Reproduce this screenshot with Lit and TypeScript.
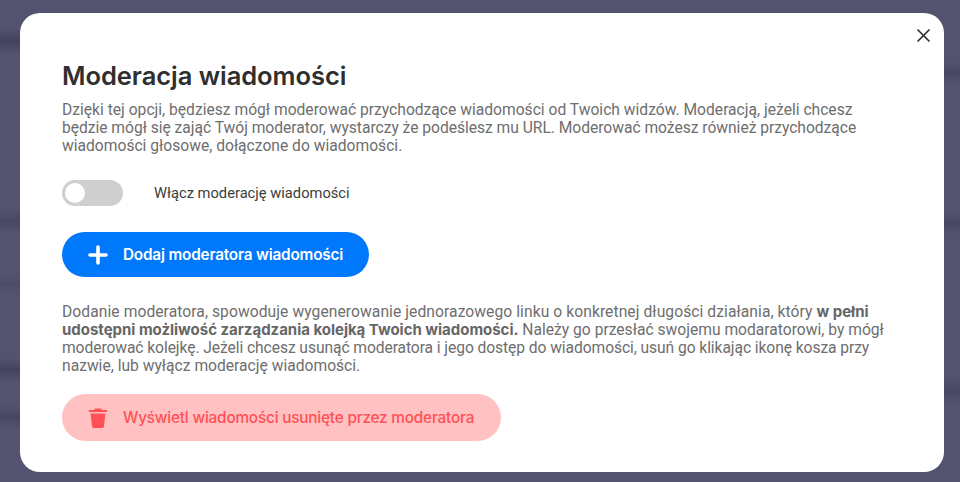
import { LitElement, html, css } from "lit";
import { customElement } from "lit/decorators.js";

@customElement("app-root")
export class AppRoot extends LitElement {
  static styles = css`
    :host {
      display: block;
      width: 960px;
      height: 482px;
      overflow: hidden;
      box-sizing: border-box;
      padding: 13px 16px 10px 20px;
      font-family: "Roboto", "Inter", sans-serif;
      background:
        linear-gradient(180deg, transparent 28px, #43435f 41px, transparent 54px, transparent 208px, #484864 221px, transparent 233px, transparent 275px, #4c4c68 284px, transparent 293px, transparent 358px, #43435f 370px, transparent 382px, transparent 405px, #474763 417px, transparent 429px) left/20px 100% no-repeat,
        linear-gradient(180deg, transparent 62px, #474763 73px, transparent 84px, transparent 212px, #484864 223px, transparent 234px, transparent 378px, #474763 391px, transparent 404px) right/16px 100% no-repeat,
        #53536f;
    }
    .card {
      position: relative;
      box-sizing: border-box;
      height: 459px;
      background: #fff;
      border-radius: 20px;
      padding: 45px 42px 0;
      display: flex;
      flex-direction: column;
      align-items: flex-start;
    }
    .close {
      position: absolute;
      top: 15px;
      right: 13px;
      width: 15px;
      height: 15px;
      display: block;
    }
    h1 {
      margin: 0;
      font-family: "Inter", sans-serif;
      font-size: 25.5px;
      line-height: 36px;
      font-weight: 600;
      color: #2f2f2f;
      letter-spacing: -0.05px;
      white-space: nowrap;
    }
    p {
      margin: 0;
      font-size: 15.63px;
      line-height: 18px;
      font-weight: 400;
      color: #6e6e6e;
      white-space: nowrap;
    }
    p span { display: block; }
    p .tight { letter-spacing: -0.03px; }
    p .wide { letter-spacing: 0.07px; }
    p .narrow { letter-spacing: -0.08px; }
    p b {
      font-family: "Inter", sans-serif;
      font-size: 15px;
      font-weight: 700;
      color: #666;
      letter-spacing: -0.02px;
    }
    .intro { margin-top: 7px; }
    .toggle-row {
      display: flex;
      align-items: center;
      margin-top: 25px;
      height: 26px;
      gap: 31px;
      font-size: 14.7px;
      color: #3c3c3c;
      white-space: nowrap;
    }
    .switch {
      width: 61px;
      height: 26px;
      border-radius: 13px;
      background: #cfcfcf;
      display: flex;
      align-items: center;
      padding-left: 3px;
      box-sizing: border-box;
    }
    .knob { width: 20px; height: 20px; border-radius: 50%; background: #fff; }
    .btn {
      display: flex;
      align-items: center;
      border-radius: 24px;
      padding-left: 26px;
      box-sizing: border-box;
      font-family: "Inter", sans-serif;
      font-size: 15.3px;
      letter-spacing: -0.18px;
      white-space: nowrap;
    }
    .btn svg { display: block; flex: none; }
    .btn span { margin-left: 15px; }
    .add {
      margin-top: 26px;
      width: 307px;
      height: 45px;
      background: #0078fb;
      color: #fff;
      font-weight: 600;
    }
    .outro { margin-top: 26px; }
    .show {
      margin-top: 19px;
      width: 439px;
      height: 47px;
      background: #ffc1c1;
      color: #ff5055;
      font-weight: 500;
    }
  `;

  render() {
    return html`
      <div class="card">
        <svg class="close" viewBox="0 0 15 15" fill="none" stroke="#2b2b2b" stroke-width="1.6">
          <path d="M1.5 1.5 13.5 13.5M13.5 1.5 1.5 13.5"></path>
        </svg>
        <h1>Moderacja wiadomości</h1>
        <p class="intro">
          <span>Dzięki tej opcji, będziesz mógł moderować przychodzące wiadomości od Twoich widzów. Moderacją, jeżeli chcesz</span>
          <span class="tight">będzie mógł się zająć Twój moderator, wystarczy że podeślesz mu URL. Moderować możesz również przychodzące</span>
          <span>wiadomości głosowe, dołączone do wiadomości.</span>
        </p>
        <div class="toggle-row">
          <div class="switch"><div class="knob"></div></div>
          <span>Włącz moderację wiadomości</span>
        </div>
        <div class="btn add">
          <svg width="20" height="20" viewBox="0 0 20 20" fill="none" stroke="#fff" stroke-width="3.6" stroke-linecap="round">
            <path d="M10 2V18M2 10H18"></path>
          </svg>
          <span>Dodaj moderatora wiadomości</span>
        </div>
        <p class="outro">
          <span class="wide">Dodanie moderatora, spowoduje wygenerowanie jednorazowego linku o konkretnej długości działania, który <b>w pełni</b></span>
          <span><b>udostępni możliwość zarządzania kolejką Twoich wiadomości.</b> Należy go przesłać swojemu modaratorowi, by mógł</span>
          <span class="narrow">moderować kolejkę. Jeżeli chcesz usunąć moderatora i jego dostęp do wiadomości, usuń go klikając ikonę kosza przy</span>
          <span>nazwie, lub wyłącz moderację wiadomości.</span>
        </p>
        <div class="btn show">
          <svg width="20" height="20" viewBox="0 0 20 20" fill="#ff5055">
            <path d="M7 0.6H13L14 2H19.2V4H0.8V2H6Z"></path>
            <path d="M2.6 5.4H17.4L16 18.2Q15.8 20 14 20H6Q4.2 20 4 18.2Z"></path>
          </svg>
          <span>Wyświetl wiadomości usunięte przez moderatora</span>
        </div>
      </div>
    `;
  }
}
